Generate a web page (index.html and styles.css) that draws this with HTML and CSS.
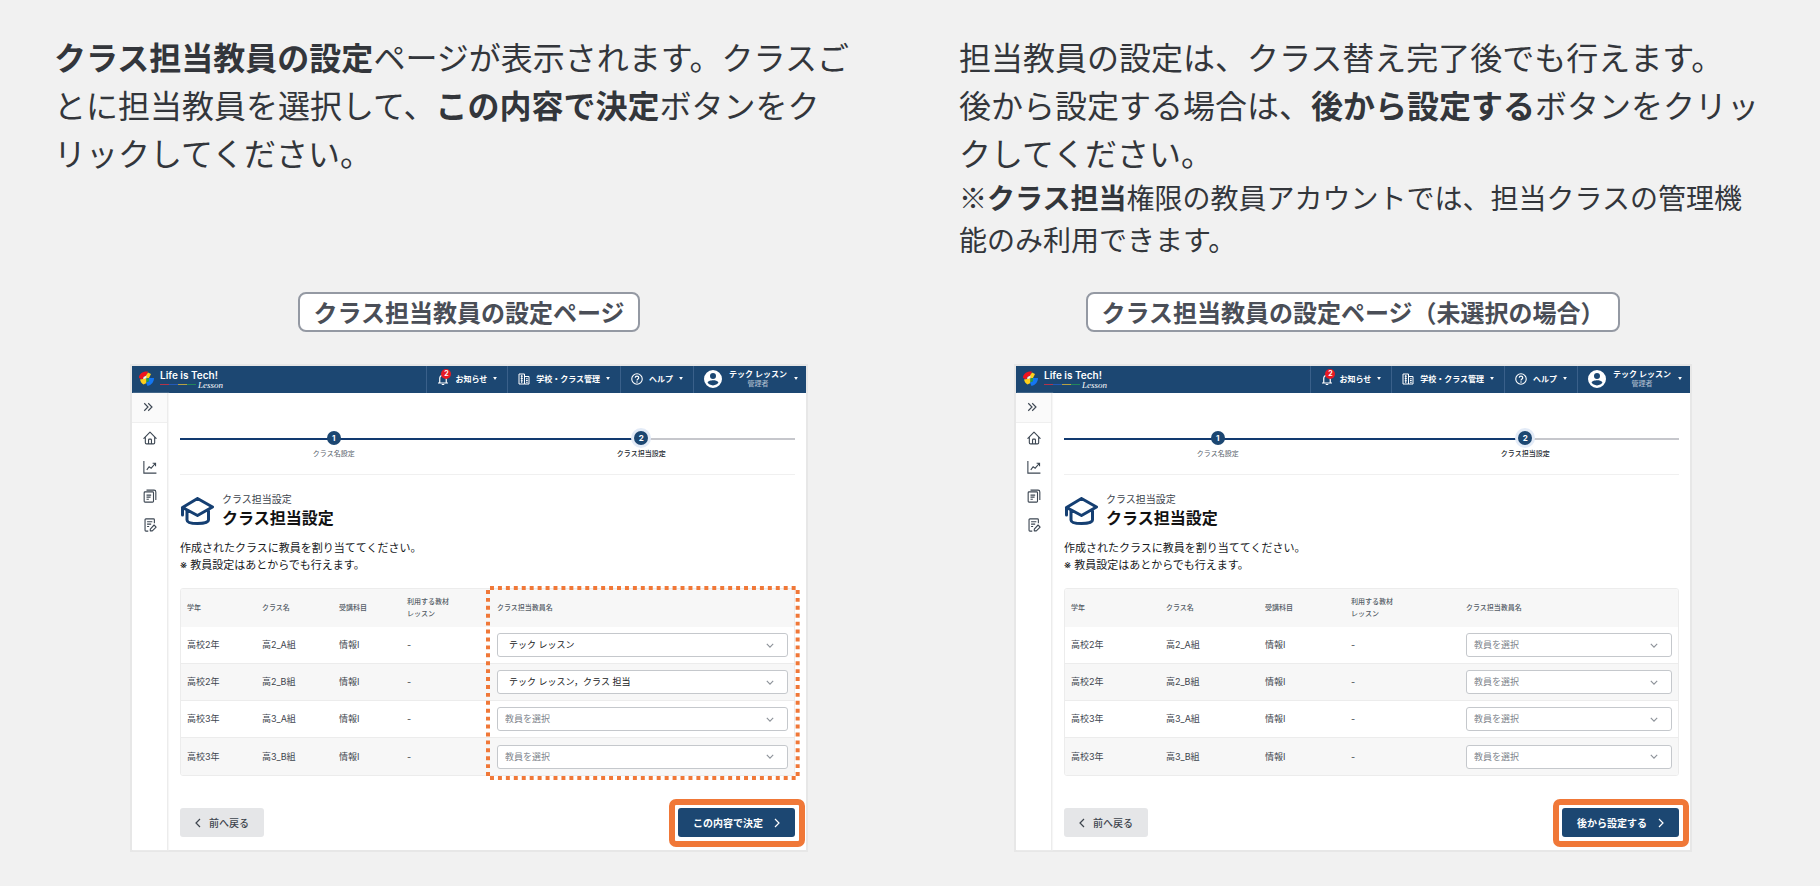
FILE: index.html
```html
<!DOCTYPE html>
<html lang="ja">
<head>
<meta charset="utf-8">
<meta name="viewport" content="width=device-width, initial-scale=1">
<title>クラス担当教員の設定</title>
<link rel="stylesheet" href="styles.css">
</head>
<body>
<svg class="sprite" aria-hidden="true">
  <symbol id="i-logo" viewBox="0 0 30 30">
    <path d="M0 14C0 5 8 0 18 1L15 9 9 12 7 17Z" fill="#f0141e"/>
    <path d="M18 3 24 6 20 14 15 15 14 9Z" fill="#ffcf1a"/>
    <path d="M9 12 15 9V15L8 17Z" fill="#f9f4e8"/>
    <path d="M2 17 8 16 15 15 15 24 9 27C5 25 3 21 2 17Z" fill="#ffcf1a"/>
    <path d="M20 14H30C30 22 25 28 17 30L14 23 20 20Z" fill="#1476f2"/>
    <path d="M15 15 20 14V20L15 23Z" fill="#22a24a"/>
  </symbol>
  <symbol id="i-bell" viewBox="0 0 24 24"><path d="M2 20H22M5.500 19V11C5.500 7 8.500 4.500 12 4.500S18.500 7 18.500 11V19M9.500 23H14.500" fill="none" stroke="currentColor" stroke-width="2.400"/></symbol>
  <symbol id="i-school" viewBox="0 0 24 24"><path d="M2 2H13V22H2ZM13 7H22V22H13M5.500 6.500H9.500M5.500 11H9.500M5.500 15.500H9.500M7.500 4V20M16 11.500H19.500M16 15H19.500M16 18.500H19.500" fill="none" stroke="currentColor" stroke-width="2"/></symbol>
  <symbol id="i-help" viewBox="0 0 24 24"><circle cx="12" cy="12" r="10.500" fill="none" stroke="currentColor" stroke-width="2.200"/><path d="M8.500 9.500C8.500 7.500 10 6.200 12 6.200S15.500 7.500 15.500 9.300C15.500 11.800 12 12 12 14.800" fill="none" stroke="currentColor" stroke-width="2.400"/><circle cx="12" cy="17.800" r="1.500" fill="currentColor"/></symbol>
  <symbol id="i-user" viewBox="0 0 24 24"><path fill="currentColor" fill-rule="evenodd" d="M12 0A12 12 0 1 0 12 24 12 12 0 0 0 12 0ZM12 4A4 4 0 1 1 12 12 4 4 0 0 1 12 4ZM12 20.500C8.800 20.500 6.200 19 4.800 16.800 5 14.500 9.600 13.500 12 13.500S19 14.500 19.200 16.800C17.800 19 15.200 20.500 12 20.500Z"/></symbol>
  <symbol id="i-caret" viewBox="0 0 10 8"><path d="M0 0H10L5 8Z" fill="currentColor"/></symbol>
  <symbol id="i-expand" viewBox="0 0 24 24"><path d="M3 3 12 12 3 21M12.500 3 21.500 12 12.500 21" fill="none" stroke="currentColor" stroke-width="2.800"/></symbol>
  <symbol id="i-home" viewBox="0 0 24 24"><path d="M1.500 12.500 12 2 22.500 12.500M4 10.500V20C4 21.300 4.700 22 6 22H18C19.300 22 20 21.300 20 20V10.500M9.500 22V15.500C9.500 14.500 10.200 14 11 14H13C13.800 14 14.500 14.500 14.500 15.500V22" fill="none" stroke="currentColor" stroke-width="1.900" stroke-linejoin="round" stroke-linecap="round"/></symbol>
  <symbol id="i-chart" viewBox="0 0 24 24"><path d="M1.500 1.500V22.500H23M6.500 17 10.500 11.500 14 14 21 6M16.500 5.500H21.500V10.500" fill="none" stroke="currentColor" stroke-width="1.900"/></symbol>
  <symbol id="i-docs" viewBox="0 0 24 24"><path d="M3.500 5H16.500C17.500 5 18 5.500 18 6.500V21C18 22 17.500 22.500 16.500 22.500H3.500C2.500 22.500 2 22 2 21V6.500C2 5.500 2.500 5 3.500 5ZM6 2H19C21 2 22 3 22 5V19M6 10.500H14M6 14H13M6 17.500H10" fill="none" stroke="currentColor" stroke-width="1.900"/></symbol>
  <symbol id="i-edit" viewBox="0 0 24 24"><path d="M9 22.500H5C4 22.500 3.500 22 3.500 21V3C3.500 2 4 1.500 5 1.500H18C19 1.500 19.500 2 19.500 3V9M7 6.500H16M7 10.500H14M7 14.500H10.500M12.500 19 19 12 22.500 15.500 16 22H12.500Z" fill="none" stroke="currentColor" stroke-width="1.900" stroke-linejoin="round"/></symbol>
  <symbol id="i-cap" viewBox="0 0 34 30"><path d="M17.500 2.500 32.500 11 17.500 19.500 2.500 11.500V19M7 14.500V24C7 26.500 12 27.500 17.500 27.500S28.500 26.500 28.500 24V14.500M2.500 11.500 17.500 2.500" fill="none" stroke="currentColor" stroke-width="3" stroke-linejoin="round" stroke-linecap="round"/></symbol>
  <symbol id="i-down" viewBox="0 0 10 6"><path d="M1 1 5 5 9 1" fill="none" stroke="currentColor" stroke-width="1.400"/></symbol>
  <symbol id="i-left" viewBox="0 0 6 10"><path d="M5 1 1 5 5 9" fill="none" stroke="currentColor" stroke-width="1.200"/></symbol>
  <symbol id="i-right" viewBox="0 0 6 10"><path d="M1 1 5 5 1 9" fill="none" stroke="currentColor" stroke-width="1.200"/></symbol>
</svg>

<section class="notes">
  <p class="note"><strong>クラス担当教員の設定</strong>ページが表示されます。クラスごとに担当教員を選択して、<strong>この内容で決定</strong>ボタンをクリックしてください。</p>
  <div>
    <p class="note">担当教員の設定は、クラス替え完了後でも行えます。<br>後から設定する場合は、<strong>後から設定する</strong>ボタンをクリックしてください。</p>
    <p class="note note-small">※<strong>クラス担当</strong>権限の教員アカウントでは、担当クラスの管理機能のみ利用できます。</p>
  </div>
</section>

<section class="figures">
  <figure class="figure">
    <figcaption class="tag">クラス担当教員の設定ページ</figcaption>
    <div class="app">
      <header class="topbar">
        <a class="brand" href="#"><svg class="brand-mark" aria-hidden="true"><use href="#i-logo"/></svg><span class="brand-text"><span class="brand-name">Life is Tech!</span><span class="brand-sub"><span class="brand-line"></span><span class="brand-script">Lesson</span></span></span></a>
        <nav class="menu">
          <button class="menu-item" type="button"><span class="bell"><svg class="icon-nav" aria-hidden="true"><use href="#i-bell"/></svg><span class="badge">2</span></span>お知らせ<svg class="caret" aria-hidden="true"><use href="#i-caret"/></svg></button>
          <button class="menu-item" type="button"><svg class="icon-nav" aria-hidden="true"><use href="#i-school"/></svg>学校・クラス管理<svg class="caret" aria-hidden="true"><use href="#i-caret"/></svg></button>
          <button class="menu-item" type="button"><svg class="icon-nav" aria-hidden="true"><use href="#i-help"/></svg>ヘルプ<svg class="caret" aria-hidden="true"><use href="#i-caret"/></svg></button>
          <button class="menu-item menu-user" type="button"><svg class="avatar" aria-hidden="true"><use href="#i-user"/></svg><span class="user"><span>テック レッスン</span><span class="role">管理者</span></span><svg class="caret" aria-hidden="true"><use href="#i-caret"/></svg></button>
        </nav>
      </header>
      <div class="body">
        <aside class="side">
          <button class="side-toggle" type="button" aria-label="メニューを開く"><svg class="icon-toggle"><use href="#i-expand"/></svg></button>
          <a class="side-link" href="#" aria-label="ホーム"><svg class="icon-side"><use href="#i-home"/></svg></a>
          <a class="side-link" href="#" aria-label="学習状況"><svg class="icon-side"><use href="#i-chart"/></svg></a>
          <a class="side-link" href="#" aria-label="教材"><svg class="icon-side"><use href="#i-docs"/></svg></a>
          <a class="side-link" href="#" aria-label="課題"><svg class="icon-side"><use href="#i-edit"/></svg></a>
        </aside>
        <main class="main">
          <ol class="steps">
            <li class="step"><span class="step-dot">1</span>クラス名設定</li>
            <li class="step step-current"><span class="step-dot">2</span>クラス担当設定</li>
          </ol>
          <div class="title">
            <svg class="cap" aria-hidden="true"><use href="#i-cap"/></svg>
            <div><p class="crumb">クラス担当設定</p><h2 class="heading">クラス担当設定</h2></div>
          </div>
          <p class="intro">作成されたクラスに教員を割り当ててください。<br>※ 教員設定はあとからでも行えます。</p>
          <div class="table-wrap">
            <table class="table table-selected">
              <colgroup><col class="c-grade"><col class="c-class"><col class="c-subject"><col class="c-lesson"><col></colgroup>
              <thead><tr><th>学年</th><th>クラス名</th><th>受講科目</th><th>利用する教材<br>レッスン</th><th>クラス担当教員名</th></tr></thead>
              <tbody>
                <tr><td>高校2年</td><td>高2_A組</td><td>情報I</td><td>-</td><td><span class="pick"><select class="select select-filled" aria-label="高2_A組の担当教員"><option>テック レッスン</option></select><svg class="down" aria-hidden="true"><use href="#i-down"/></svg></span></td></tr>
                <tr><td>高校2年</td><td>高2_B組</td><td>情報I</td><td>-</td><td><span class="pick"><select class="select select-filled" aria-label="高2_B組の担当教員"><option>テック レッスン，クラス 担当</option></select><svg class="down" aria-hidden="true"><use href="#i-down"/></svg></span></td></tr>
                <tr><td>高校3年</td><td>高3_A組</td><td>情報I</td><td>-</td><td><span class="pick"><select class="select" aria-label="高3_A組の担当教員"><option>教員を選択</option></select><svg class="down" aria-hidden="true"><use href="#i-down"/></svg></span></td></tr>
                <tr><td>高校3年</td><td>高3_B組</td><td>情報I</td><td>-</td><td><span class="pick"><select class="select" aria-label="高3_B組の担当教員"><option>教員を選択</option></select><svg class="down" aria-hidden="true"><use href="#i-down"/></svg></span></td></tr>
              </tbody>
            </table>
            <svg class="marker" viewBox="0 0 314 194" preserveAspectRatio="none" aria-hidden="true">
              <path pathLength="77" d="M4 2H310"/><path pathLength="77" d="M4 192H310"/>
              <path pathLength="47" d="M2 4V190"/><path pathLength="47" d="M312 4V190"/>
            </svg>
          </div>
          <div class="actions">
            <button class="btn btn-back" type="button"><svg class="arrow" aria-hidden="true"><use href="#i-left"/></svg>前へ戻る</button>
            <button class="btn btn-next" type="button">この内容で決定<svg class="arrow" aria-hidden="true"><use href="#i-right"/></svg></button>
          </div>
        </main>
      </div>
    </div>
  </figure>

  <figure class="figure">
    <figcaption class="tag">クラス担当教員の設定ページ（未選択の場合）</figcaption>
    <div class="app">
      <header class="topbar">
        <a class="brand" href="#"><svg class="brand-mark" aria-hidden="true"><use href="#i-logo"/></svg><span class="brand-text"><span class="brand-name">Life is Tech!</span><span class="brand-sub"><span class="brand-line"></span><span class="brand-script">Lesson</span></span></span></a>
        <nav class="menu">
          <button class="menu-item" type="button"><span class="bell"><svg class="icon-nav" aria-hidden="true"><use href="#i-bell"/></svg><span class="badge">2</span></span>お知らせ<svg class="caret" aria-hidden="true"><use href="#i-caret"/></svg></button>
          <button class="menu-item" type="button"><svg class="icon-nav" aria-hidden="true"><use href="#i-school"/></svg>学校・クラス管理<svg class="caret" aria-hidden="true"><use href="#i-caret"/></svg></button>
          <button class="menu-item" type="button"><svg class="icon-nav" aria-hidden="true"><use href="#i-help"/></svg>ヘルプ<svg class="caret" aria-hidden="true"><use href="#i-caret"/></svg></button>
          <button class="menu-item menu-user" type="button"><svg class="avatar" aria-hidden="true"><use href="#i-user"/></svg><span class="user"><span>テック レッスン</span><span class="role">管理者</span></span><svg class="caret" aria-hidden="true"><use href="#i-caret"/></svg></button>
        </nav>
      </header>
      <div class="body">
        <aside class="side">
          <button class="side-toggle" type="button" aria-label="メニューを開く"><svg class="icon-toggle"><use href="#i-expand"/></svg></button>
          <a class="side-link" href="#" aria-label="ホーム"><svg class="icon-side"><use href="#i-home"/></svg></a>
          <a class="side-link" href="#" aria-label="学習状況"><svg class="icon-side"><use href="#i-chart"/></svg></a>
          <a class="side-link" href="#" aria-label="教材"><svg class="icon-side"><use href="#i-docs"/></svg></a>
          <a class="side-link" href="#" aria-label="課題"><svg class="icon-side"><use href="#i-edit"/></svg></a>
        </aside>
        <main class="main">
          <ol class="steps">
            <li class="step"><span class="step-dot">1</span>クラス名設定</li>
            <li class="step step-current"><span class="step-dot">2</span>クラス担当設定</li>
          </ol>
          <div class="title">
            <svg class="cap" aria-hidden="true"><use href="#i-cap"/></svg>
            <div><p class="crumb">クラス担当設定</p><h2 class="heading">クラス担当設定</h2></div>
          </div>
          <p class="intro">作成されたクラスに教員を割り当ててください。<br>※ 教員設定はあとからでも行えます。</p>
          <div class="table-wrap">
            <table class="table table-empty">
              <colgroup><col class="c-grade"><col class="c-class"><col class="c-subject"><col class="c-lesson"><col></colgroup>
              <thead><tr><th>学年</th><th>クラス名</th><th>受講科目</th><th>利用する教材<br>レッスン</th><th>クラス担当教員名</th></tr></thead>
              <tbody>
                <tr><td>高校2年</td><td>高2_A組</td><td>情報I</td><td>-</td><td><span class="pick"><select class="select" aria-label="高2_A組の担当教員"><option>教員を選択</option></select><svg class="down" aria-hidden="true"><use href="#i-down"/></svg></span></td></tr>
                <tr><td>高校2年</td><td>高2_B組</td><td>情報I</td><td>-</td><td><span class="pick"><select class="select" aria-label="高2_B組の担当教員"><option>教員を選択</option></select><svg class="down" aria-hidden="true"><use href="#i-down"/></svg></span></td></tr>
                <tr><td>高校3年</td><td>高3_A組</td><td>情報I</td><td>-</td><td><span class="pick"><select class="select" aria-label="高3_A組の担当教員"><option>教員を選択</option></select><svg class="down" aria-hidden="true"><use href="#i-down"/></svg></span></td></tr>
                <tr><td>高校3年</td><td>高3_B組</td><td>情報I</td><td>-</td><td><span class="pick"><select class="select" aria-label="高3_B組の担当教員"><option>教員を選択</option></select><svg class="down" aria-hidden="true"><use href="#i-down"/></svg></span></td></tr>
              </tbody>
            </table>
          </div>
          <div class="actions">
            <button class="btn btn-back" type="button"><svg class="arrow" aria-hidden="true"><use href="#i-left"/></svg>前へ戻る</button>
            <button class="btn btn-next" type="button">後から設定する<svg class="arrow" aria-hidden="true"><use href="#i-right"/></svg></button>
          </div>
        </main>
      </div>
    </div>
  </figure>
</section>
</body>
</html>
```

FILE: styles.css
```css
* { box-sizing: border-box; }
body {
  margin: 0;
  background: #f1f1f1;
  color: #33363b;
  font-family: "Noto Sans CJK JP", sans-serif;
}
p, h2, ol, figure { margin: 0; padding: 0; }
button, select { font: inherit; color: inherit; }
button { border: 0; background: none; padding: 0; cursor: pointer; }
svg { display: block; flex: none; }
.sprite { position: absolute; width: 0; height: 0; }

/* Explanations */
.notes {
  display: grid;
  grid-template-columns: 1fr 1fr;
  gap: 98px;
  padding: 32px 54px 0;
}
.note { font-size: 32px; line-height: 48px; line-break: strict; }
.note-small { font-size: 28px; line-height: 42px; }
strong { font-weight: 700; }

/* Captioned figures */
.figures {
  display: grid;
  grid-template-columns: 1fr 1fr;
  padding: 32px 25px 34px 27px;
}
.figure { display: flex; flex-direction: column; align-items: center; gap: 32px; padding: 0 103px; }
.tag {
  padding: 0 13px;
  border: 2px solid #9499a3;
  border-radius: 8px;
  background: #fff;
  color: #4a4e57;
  font-size: 24px;
  font-weight: 700;
  line-height: 36px;
  white-space: nowrap;
}
.app {
  width: 100%;
  border: 2px solid #e7e7e7;
  background: #fff;
  color: #3d444d;
  font-family: Inter, "Noto Sans CJK JP", sans-serif;
  font-size: 9px;
}

/* Top bar */
.topbar { display: flex; justify-content: space-between; height: 27px; background: #1c4772; color: #fff; }
.brand { display: flex; align-items: center; gap: 6px; padding: 0 0 2px 7px; color: #fff; text-decoration: none; }
.brand-mark { width: 15px; height: 15px; }
.brand-text { display: flex; flex-direction: column; }
.brand-name { font-size: 10px; line-height: 12px; font-weight: 600; }
.brand-sub { display: flex; align-items: center; gap: 2px; height: 8px; }
.brand-line {
  width: 36px;
  height: 1px;
  background: linear-gradient(90deg, #b2344a 25%, #2459b5 25% 50%, #b7a143 50% 75%, #22855c 75%);
}
.brand-script { font-family: "Liberation Serif", serif; font-style: italic; font-size: 9px; line-height: 8px; }
.menu { display: flex; }
.menu-item {
  display: flex;
  align-items: center;
  gap: 6px;
  padding: 0 10px 2px;
  border-left: 1px solid #3a608a;
  font-size: 8px;
  font-weight: 700;
  white-space: nowrap;
}
.icon-nav { width: 12px; height: 12px; }
.bell { position: relative; }
.badge {
  position: absolute;
  top: -4px;
  left: 4px;
  width: 10px;
  height: 10px;
  border-radius: 50%;
  background: #e81a24;
  font-size: 7px;
  line-height: 10px;
  text-align: center;
}
.caret { width: 4px; height: 3px; }
.menu-user { gap: 7px; padding-right: 8px; }
.avatar { width: 18px; height: 18px; }
.user { display: flex; flex-direction: column; align-items: center; line-height: 10px; }
.role { color: #a9bacb; font-size: 7px; font-weight: 500; }

/* Side bar */
.body { display: flex; }
.side { display: flex; flex-direction: column; width: 36px; border-right: 1px solid #ececec; box-shadow: 1px 0 1px #f6f6f6; }
.side-toggle, .side-link { display: flex; align-items: center; justify-content: center; height: 29px; color: #3d4753; }
.side-toggle { height: 30px; padding: 0 3px 2px 0; border-bottom: 1px solid #efefef; background: #fafafa; }
.icon-toggle { width: 10px; height: 10px; }
.icon-side { width: 14px; height: 14px; }

/* Main column */
.main { flex: 1; min-width: 0; padding: 38px 11px 13px 12px; }
.steps {
  display: grid;
  grid-template-columns: 1fr 1fr;
  padding-bottom: 15px;
  border-bottom: 1px solid #f0f0f0;
  background: linear-gradient(90deg, #123a70 75%, #c6c7cc 75%) 0 7px / 100% 2px no-repeat;
  list-style: none;
}
.step { display: flex; flex-direction: column; align-items: center; gap: 4px; font-size: 7px; line-height: 10px; color: #59616b; }
.step-dot {
  width: 14px;
  height: 14px;
  border-radius: 50%;
  background: #1c4772;
  color: #fff;
  font-size: 8px;
  font-weight: 700;
  line-height: 14px;
  text-align: center;
}
.step-current { color: #22272e; font-weight: 500; }
.step-current .step-dot { box-shadow: 0 0 0 3px #e3ebf7; }
.title { display: flex; align-items: center; gap: 8px; margin-top: 16px; }
.cap { width: 34px; height: 30px; color: #153f72; }
.crumb { font-size: 10px; line-height: 16px; }
.heading { color: #111; font-size: 16px; line-height: 23px; font-weight: 700; }
.intro { margin-top: 10px; color: #16181b; font-size: 11px; line-height: 17px; }

.table-wrap { position: relative; margin-top: 14px; }
.table {
  width: 100%;
  table-layout: fixed;
  border: 1px solid #ececec;
  border-radius: 3px;
  border-spacing: 0;
  overflow: hidden;
}
.table th, .table td { padding: 0 6px; text-align: left; }
.table th { height: 38px; background: #f7f7f7; font-size: 7px; line-height: 12px; font-weight: 500; color: #535b65; }
.table td { height: 37px; line-height: 12px; border-bottom: 1px solid #ececec; }
.table tr:last-child td { border-bottom: 0; }
.table tr:nth-child(even) td { background: #f7f7f7; }
.table-selected .c-grade { width: 75px; }
.table-selected .c-class { width: 77px; }
.table-selected .c-subject { width: 68px; }
.table-selected .c-lesson { width: 90px; }
.table-empty .c-grade { width: 95px; }
.table-empty .c-class { width: 99px; }
.table-empty .c-subject { width: 86px; }
.table-empty .c-lesson { width: 115px; }
.pick { display: grid; align-items: center; }
.select {
  grid-area: 1 / 1;
  width: 100%;
  height: 24px;
  padding: 0 30px 0 7px;
  border: 1px solid #c5c8cc;
  border-radius: 3px;
  background: #fff;
  color: #80858c;
  appearance: none;
}
.select-filled { padding-left: 11px; color: #16181b; }
.down { grid-area: 1 / 1; justify-self: end; width: 8px; height: 5px; margin-right: 14px; color: #8d9299; pointer-events: none; }
.marker {
  position: absolute;
  top: -2px;
  right: -5px;
  width: 51%;
  height: calc(100% + 6px);
  fill: none;
  stroke: #f07838;
  stroke-width: 4;
  stroke-dasharray: 1 1;
  pointer-events: none;
}

.actions { display: flex; justify-content: space-between; margin-top: 32px; }
.btn { display: flex; align-items: center; gap: 8px; height: 29px; padding: 0 15px; border-radius: 3px; font-size: 10px; }
.btn-back { background: #e5e6e8; color: #3d444d; font-weight: 500; }
.btn-next { position: relative; gap: 11px; background: #1c4772; color: #fff; font-weight: 700; }
.btn-next::after {
  content: "";
  position: absolute;
  inset: -9px -10px -10px -9px;
  border: 6px solid #f07838;
  border-radius: 7px;
}
.arrow { width: 6px; height: 10px; }
```
